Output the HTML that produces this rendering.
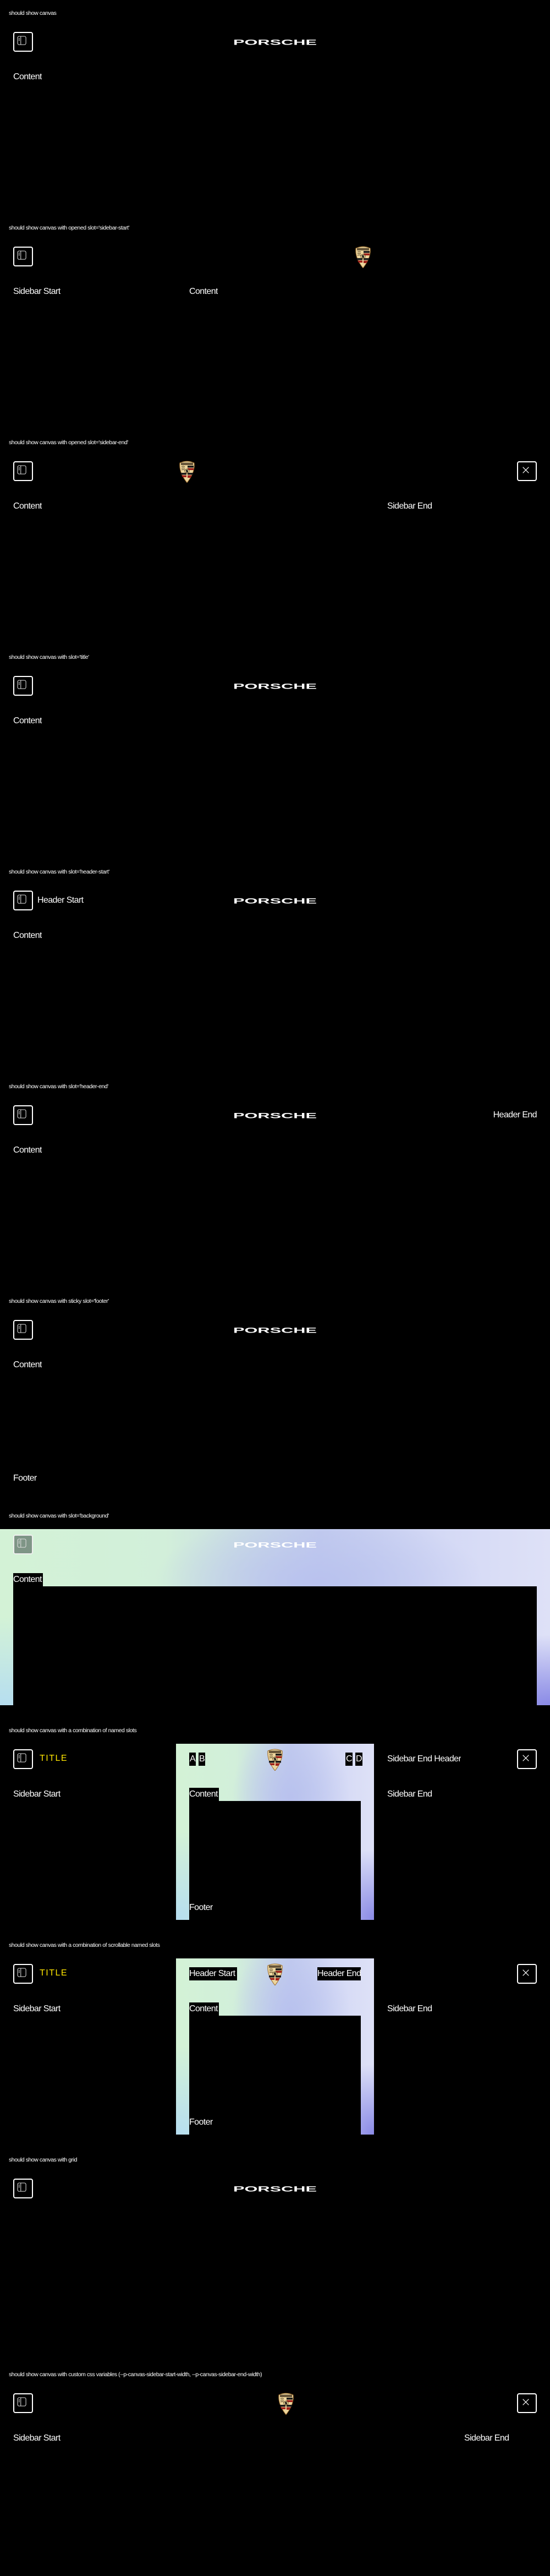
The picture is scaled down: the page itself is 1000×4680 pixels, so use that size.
<!DOCTYPE html>
<html><head><meta charset="utf-8">
<style>
*{margin:0;padding:0;box-sizing:border-box}
html,body{width:1000px;height:4680px;background:#000;overflow:hidden}
body{position:relative;font-family:"Liberation Sans",sans-serif;color:#fff}
.s{position:absolute;left:0;width:1000px;height:390px;overflow:hidden}
.lbl{position:absolute;left:16px;top:17px;font-size:10.5px;line-height:14px;color:#fff;letter-spacing:-0.45px;white-space:nowrap}
.btn{position:absolute;top:58px;width:36px;height:36px;border:2px solid #fff;border-radius:4px}
.btn svg{position:absolute;left:0;top:0}
.t{position:absolute;font-size:16px;line-height:24px;white-space:nowrap;letter-spacing:-0.6px;overflow:hidden}
.blk{background:#000}
.wm{position:absolute;top:70px}
.crest{position:absolute;top:56px;width:32px;height:41px}
.grad{position:absolute;background:
 radial-gradient(ellipse 30% 40% at 100% 100%,#8a8ae6 0,rgba(138,138,230,0) 100%),
 radial-gradient(ellipse 45% 50% at 0% 100%,#b6def0 0,rgba(182,222,240,0) 100%),
 radial-gradient(ellipse 30% 40% at 58% 30%,#b9c2ee 0,rgba(185,194,238,0) 100%),
 linear-gradient(90deg,#d3f2d6 0%,#d2efda 30%,#c2cbee 58%,#d4d9f5 80%,#dee1f7 100%)}
.yl{color:#ffe600;letter-spacing:1.5px}
</style></head><body>

<svg width="0" height="0" style="position:absolute">
<defs>
<symbol id="ic" viewBox="0 0 36 36">
<rect x="9" y="9" width="17" height="17" rx="3" fill="none" stroke="#ddd" stroke-width="1.2"/>
<line x1="15.5" y1="9" x2="15.5" y2="26" stroke="#ddd" stroke-width="1.2"/>
<rect x="11" y="12.5" width="2.5" height="1.1" fill="#ddd"/>
<rect x="11" y="14.8" width="2.5" height="1.1" fill="#ddd"/>
<rect x="11" y="17.1" width="2.5" height="1.1" fill="#ddd"/>
</symbol>
<symbol id="x" viewBox="0 0 36 36">
<path d="M12 12L24 24M24 12L12 24" stroke="#fff" stroke-width="1.3"/>
</symbol>
<symbol id="wm" viewBox="0 0 152 12">
<text x="0" y="11.5" font-family="Liberation Sans,sans-serif" font-weight="bold" font-size="13.5" fill="#fff" textLength="152" lengthAdjust="spacingAndGlyphs">PORSCHE</text>
</symbol>
<symbol id="cr" viewBox="0 0 32 41">
<path d="M3 5 Q16 -1 29 5 Q31 22 16 41 Q1 22 3 5Z" fill="#ecd59c" stroke="#9a6a2a" stroke-width="1"/>
<rect x="5" y="4.5" width="22" height="4.5" fill="#3a2a18" opacity=".75"/>
<path d="M17 10H28V13.5H17Z" fill="#1a1a1a"/><path d="M17 14.5H28V18H17Z" fill="#a0201a"/>
<path d="M5 23H15V26.5H5Z" fill="#1a1a1a"/><path d="M6 27.5H15V31H8Z" fill="#a0201a"/>
<path d="M17 23H27V26.5H17Z" fill="#1a1a1a"/><path d="M17 27.5H25L22 32H17Z" fill="#a0201a"/>
<path d="M6 12Q9 10 12 12M6 15Q9 13 12 15M6 18Q9 16 12 18" stroke="#4a3a20" stroke-width="1" fill="none"/>
<circle cx="16" cy="20" r="4" fill="#f4dc9c" stroke="#3a2a10" stroke-width=".8"/>
<path d="M14 18L17 17L18 22L15 23Z" fill="#111"/>
</symbol>
</defs></svg>

<!-- 1 -->
<div class="s" style="top:0">
<div class="lbl">should show canvas</div>
<div class="btn" style="left:24px"><svg width="32" height="32" viewBox="2 2 32 32"><use href="#ic"/></svg></div>
<svg class="wm" style="left:424px" width="152" height="12"><use href="#wm"/></svg>
<div class="t" style="left:24px;top:128px">Content</div>
</div>

<!-- 2 -->
<div class="s" style="top:390px">
<div class="lbl">should show canvas with opened slot='sidebar-start'</div>
<div class="btn" style="left:24px"><svg width="32" height="32" viewBox="2 2 32 32"><use href="#ic"/></svg></div>
<svg class="crest" style="left:644px"><use href="#cr"/></svg>
<div class="t" style="left:24px;top:128px">Sidebar Start</div>
<div class="t" style="left:344px;top:128px">Content</div>
</div>

<!-- 3 -->
<div class="s" style="top:780px">
<div class="lbl">should show canvas with opened slot='sidebar-end'</div>
<div class="btn" style="left:24px"><svg width="32" height="32" viewBox="2 2 32 32"><use href="#ic"/></svg></div>
<svg class="crest" style="left:324px"><use href="#cr"/></svg>
<div class="btn" style="left:940px"><svg width="32" height="32" viewBox="2 2 32 32"><use href="#x"/></svg></div>
<div class="t" style="left:24px;top:128px">Content</div>
<div class="t" style="left:704px;top:128px">Sidebar End</div>
</div>

<!-- 4 -->
<div class="s" style="top:1170px">
<div class="lbl">should show canvas with slot='title'</div>
<div class="btn" style="left:24px"><svg width="32" height="32" viewBox="2 2 32 32"><use href="#ic"/></svg></div>
<svg class="wm" style="left:424px" width="152" height="12"><use href="#wm"/></svg>
<div class="t" style="left:24px;top:128px">Content</div>
</div>

<!-- 5 -->
<div class="s" style="top:1560px">
<div class="lbl">should show canvas with slot='header-start'</div>
<div class="btn" style="left:24px"><svg width="32" height="32" viewBox="2 2 32 32"><use href="#ic"/></svg></div>
<div class="t" style="left:68px;top:64px">Header Start</div>
<svg class="wm" style="left:424px" width="152" height="12"><use href="#wm"/></svg>
<div class="t" style="left:24px;top:128px">Content</div>
</div>

<!-- 6 -->
<div class="s" style="top:1950px">
<div class="lbl">should show canvas with slot='header-end'</div>
<div class="btn" style="left:24px"><svg width="32" height="32" viewBox="2 2 32 32"><use href="#ic"/></svg></div>
<svg class="wm" style="left:424px" width="152" height="12"><use href="#wm"/></svg>
<div class="t" style="right:24px;top:64px">Header End</div>
<div class="t" style="left:24px;top:128px">Content</div>
</div>

<!-- 7 -->
<div class="s" style="top:2340px">
<div class="lbl">should show canvas with sticky slot='footer'</div>
<div class="btn" style="left:24px"><svg width="32" height="32" viewBox="2 2 32 32"><use href="#ic"/></svg></div>
<svg class="wm" style="left:424px" width="152" height="12"><use href="#wm"/></svg>
<div class="t" style="left:24px;top:128px">Content</div>
<div class="t" style="left:24px;top:334px">Footer</div>
</div>

<!-- 8 -->
<div class="s" style="top:2730px">
<div class="lbl">should show canvas with slot='background'</div>
<div class="grad" style="left:0;top:48px;width:1000px;height:320px"></div>
<div class="btn" style="left:24px;background:rgba(90,110,100,.7);border-color:#eee"><svg width="32" height="32" viewBox="2 2 32 32"><use href="#ic"/></svg></div>
<svg class="wm" style="left:424px" width="152" height="12"><use href="#wm"/></svg>
<div class="t blk" style="left:24px;top:128px;width:54px">Content</div>
<div class="blk" style="position:absolute;left:24px;top:152px;width:952px;height:216px"></div>
</div>

<!-- 9 -->
<div class="s" style="top:3120px">
<div class="lbl">should show canvas with a combination of named slots</div>
<div class="grad" style="left:320px;top:48px;width:360px;height:320px"></div>
<div class="btn" style="left:24px"><svg width="32" height="32" viewBox="2 2 32 32"><use href="#ic"/></svg></div>
<div class="t yl" style="left:72px;top:63px">TITLE</div>
<div class="t blk" style="left:344px;top:64px;padding:0 1px">A</div>
<div class="t blk" style="left:361px;top:64px;padding:0 1px">B</div>
<svg class="crest" style="left:484px"><use href="#cr"/></svg>
<div class="t blk" style="left:628px;top:64px;padding:0 1px">C</div>
<div class="t blk" style="left:646px;top:64px;padding:0 1px">D</div>
<div class="t" style="left:704px;top:64px">Sidebar End Header</div>
<div class="btn" style="left:940px"><svg width="32" height="32" viewBox="2 2 32 32"><use href="#x"/></svg></div>
<div class="t" style="left:24px;top:128px">Sidebar Start</div>
<div class="t blk" style="left:344px;top:128px;width:54px">Content</div>
<div class="blk" style="position:absolute;left:344px;top:152px;width:312px;height:216px"></div>
<div class="t" style="left:344px;top:334px">Footer</div>
<div class="t" style="left:704px;top:128px">Sidebar End</div>
</div>

<!-- 10 -->
<div class="s" style="top:3510px">
<div class="lbl">should show canvas with a combination of scrollable named slots</div>
<div class="grad" style="left:320px;top:48px;width:360px;height:320px"></div>
<div class="btn" style="left:24px"><svg width="32" height="32" viewBox="2 2 32 32"><use href="#ic"/></svg></div>
<div class="t yl" style="left:72px;top:63px">TITLE</div>
<div class="t blk" style="left:344px;top:64px;width:87px">Header Start</div>
<svg class="crest" style="left:484px"><use href="#cr"/></svg>
<div class="t blk" style="left:577px;top:64px;width:79px">Header End</div>
<div class="btn" style="left:940px"><svg width="32" height="32" viewBox="2 2 32 32"><use href="#x"/></svg></div>
<div class="t" style="left:24px;top:128px">Sidebar Start</div>
<div class="t blk" style="left:344px;top:128px;width:54px">Content</div>
<div class="blk" style="position:absolute;left:344px;top:152px;width:312px;height:216px"></div>
<div class="t" style="left:344px;top:334px">Footer</div>
<div class="t" style="left:704px;top:128px">Sidebar End</div>
</div>

<!-- 11 -->
<div class="s" style="top:3900px">
<div class="lbl">should show canvas with grid</div>
<div class="btn" style="left:24px"><svg width="32" height="32" viewBox="2 2 32 32"><use href="#ic"/></svg></div>
<svg class="wm" style="left:424px" width="152" height="12"><use href="#wm"/></svg>
</div>

<!-- 12 -->
<div class="s" style="top:4290px">
<div class="lbl">should show canvas with custom css variables (--p-canvas-sidebar-start-width, --p-canvas-sidebar-end-width)</div>
<div class="btn" style="left:24px"><svg width="32" height="32" viewBox="2 2 32 32"><use href="#ic"/></svg></div>
<svg class="crest" style="left:504px"><use href="#cr"/></svg>
<div class="btn" style="left:940px"><svg width="32" height="32" viewBox="2 2 32 32"><use href="#x"/></svg></div>
<div class="t" style="left:24px;top:128px">Sidebar Start</div>
<div class="t" style="left:844px;top:128px">Sidebar End</div>
</div>

</body></html>
